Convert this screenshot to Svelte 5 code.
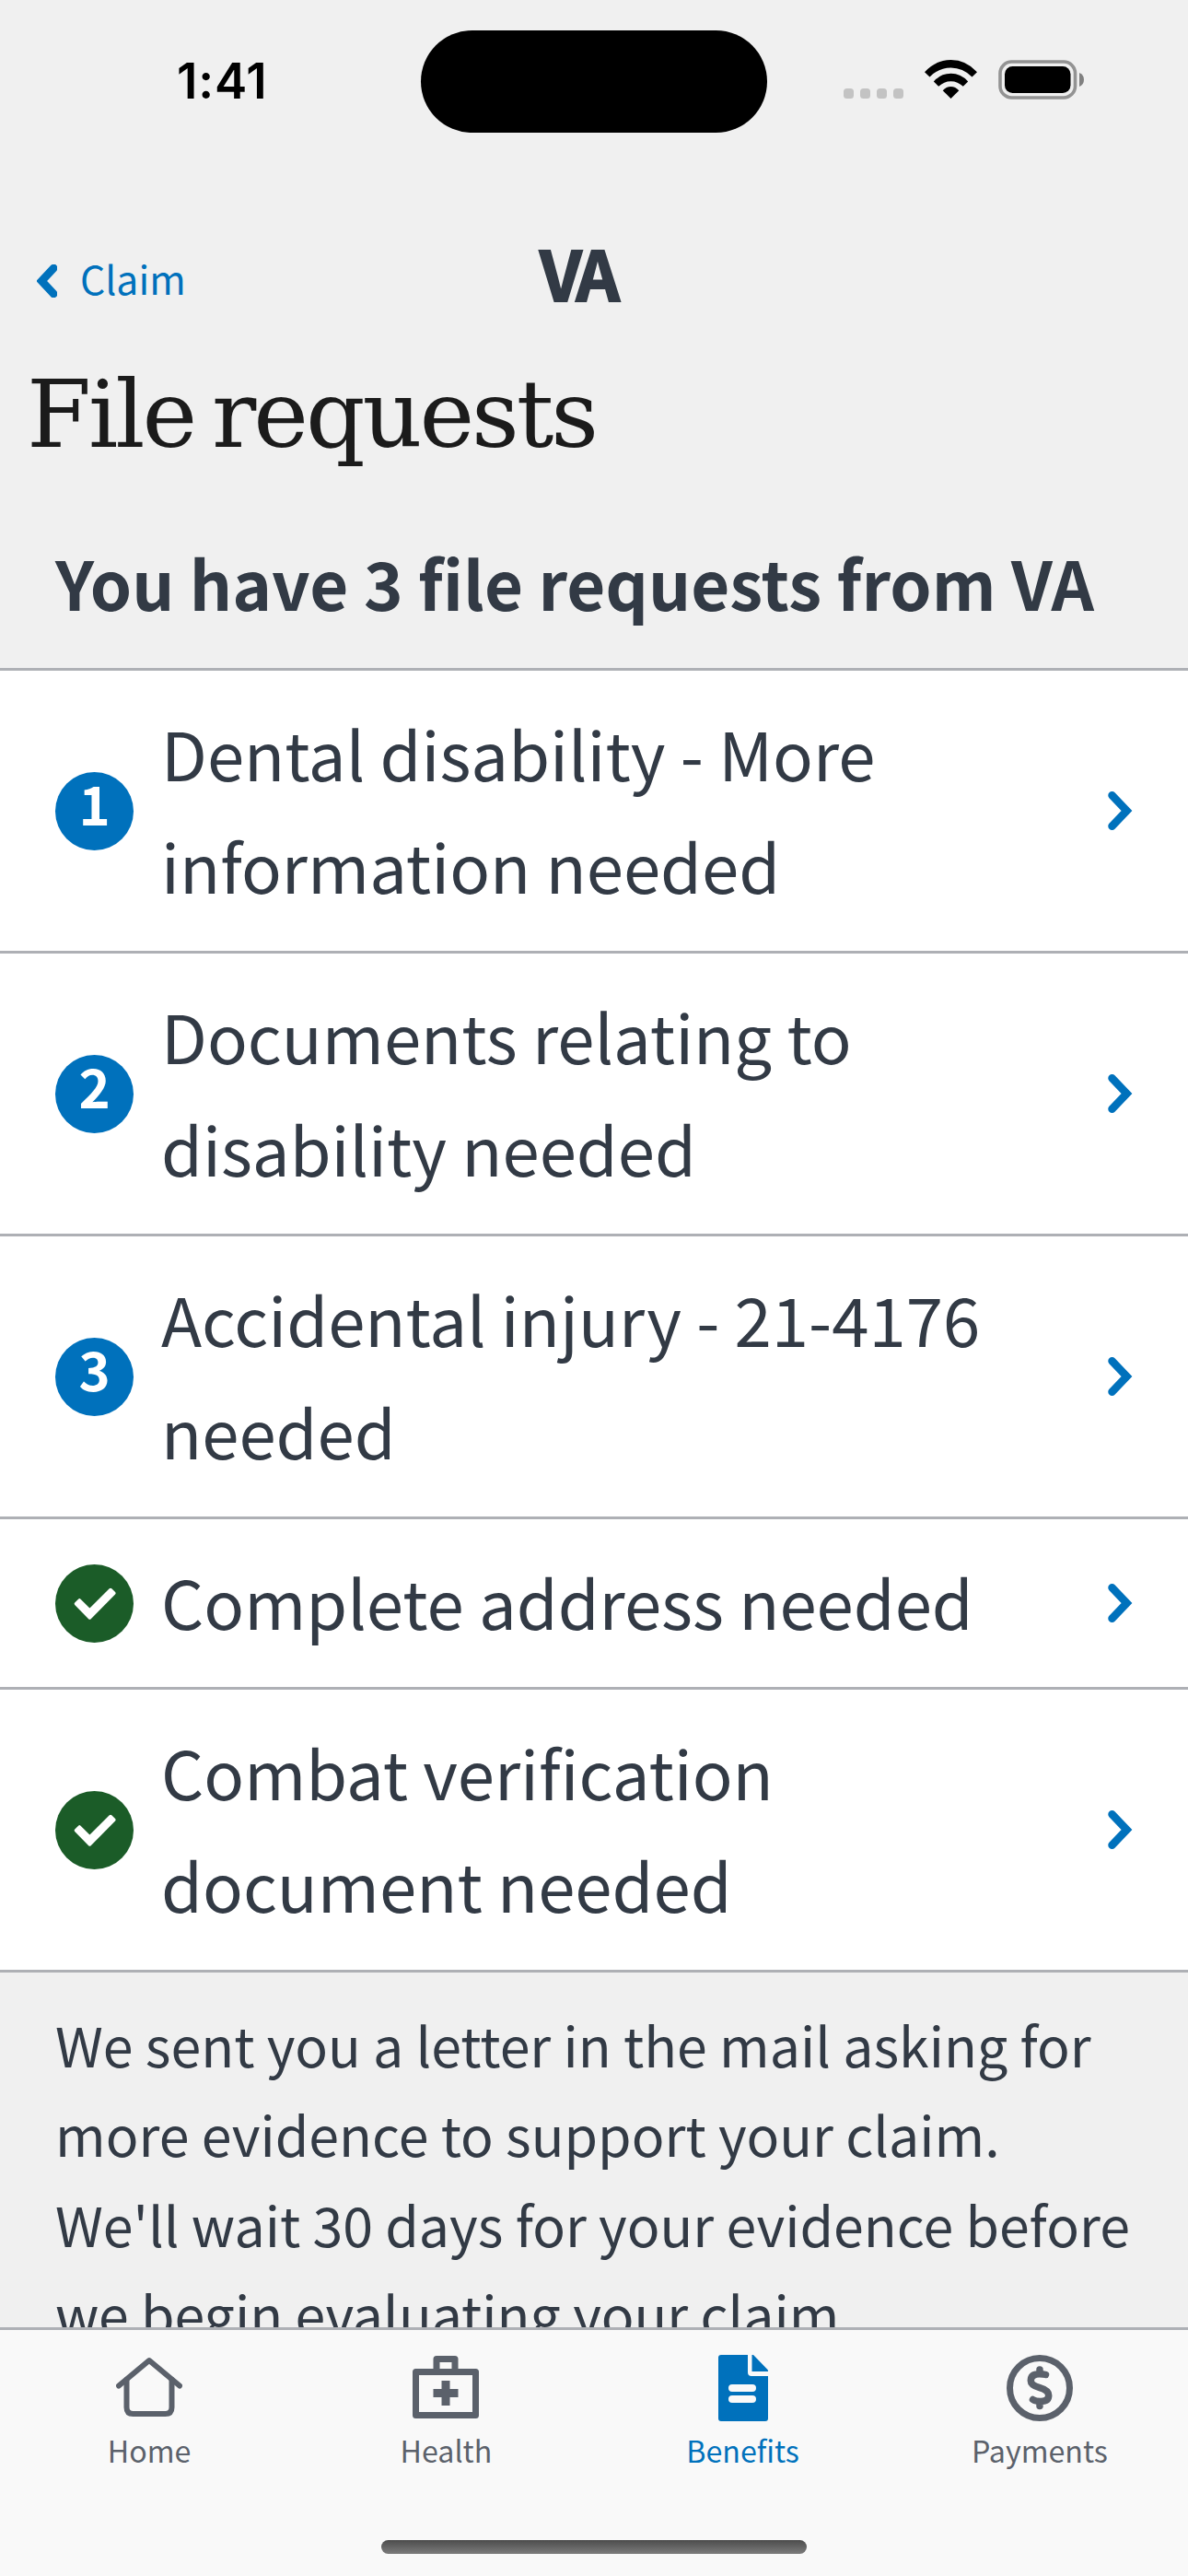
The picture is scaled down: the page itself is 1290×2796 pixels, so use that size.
<script>
  const requests = [
    { badge: '1', title: 'Dental disability - More information needed' },
    { badge: '2', title: 'Documents relating to disability needed' },
    { badge: '3', title: 'Accidental injury - 21-4176 needed' },
    { done: true, title: 'Complete address needed' },
    { done: true, title: 'Combat verification document needed' }
  ];
  const tabs = ['Home', 'Health', 'Benefits', 'Payments'];
  const active = 'Benefits';
</script>

<div class="screen">
  <header class="status">
    <div class="side"><span class="time">1:41</span></div>
    <div class="island"></div>
    <div class="side indicators">
      <div class="dots"><i></i><i></i><i></i><i></i></div>
      <svg class="wifi" viewBox="0 0 57 42" width="57" height="42">
        <path d="M0 13.2Q12 0 28.500 0T57 13.200L51.500 18.500Q41.500 8.500 28.500 8.500T5.500 18.500Z" />
        <path d="M9.800 23.500Q17.500 14.800 28.500 14.800T47.200 23.500L41.800 28.800Q36 23.200 28.500 23.200T15.200 28.800Z" />
        <path d="M19.700 33.300Q23.500 29 28.500 29T37.300 33.300L28.500 42Z" />
      </svg>
      <svg class="battery" viewBox="0 0 93 43" width="93" height="43">
        <rect x="2" y="2" width="81.500" height="39" rx="12.500" fill="none" stroke="#939393" stroke-width="3.600" />
        <rect x="7" y="7" width="71.500" height="29" rx="8.500" />
        <path d="M88 14Q93 16 93 21.500T88 29Z" fill="#808080" />
      </svg>
    </div>
  </header>

  <nav class="topbar">
    <div class="back">
      <svg viewBox="0 0 22 36" width="22" height="36"><path d="M18.300 4L5.200 18L18.300 32" /></svg>
      <span>Claim</span>
    </div>
    <div class="logo">VA</div>
    <div></div>
  </nav>

  <h1>File requests</h1>

  <main>
    <h2>You have 3 file requests from VA</h2>
    <ul>
      {#each requests as request}
        <li>
          {#if request.done}
            <svg class="badge" viewBox="0 0 84 84" width="85" height="85">
              <circle cx="42" cy="42" r="42" fill="#1b5c28" />
              <path d="M59.300 27.200L63.100 31L37 57.200L22.200 42.300L26 38.500L37 49.400Z" fill="#fff" stroke="#fff" stroke-width="3.500" stroke-linejoin="round" />
            </svg>
          {:else}
            <span class="badge number">{request.badge}</span>
          {/if}
          <span class="title">{request.title}</span>
          <svg class="chevron" viewBox="0 0 27 42" width="27" height="42"><path d="M4.500 4.300L20.500 21L4.500 37.700" /></svg>
        </li>
      {/each}
    </ul>
    <p>We sent you a letter in the mail asking for more evidence to support your claim. We'll wait 30 days for your evidence before we begin evaluating your claim.</p>
  </main>

  <footer>
    <div class="tabs">
      {#each tabs as tab}
        <div class="tab" class:active={tab === active}>
          <svg viewBox="0 0 72 72" width="72" height="72">
            {#if tab === 'Home'}
              <path class="line" d="M3 33.500L36 6L69 33.500" />
              <path class="line" d="M11.500 27V57Q11.500 64 18.500 64H53.500Q60.500 64 60.500 57V27" />
            {:else if tab === 'Health'}
              <path class="box" d="M3.500 18.500H68.500V65.500H3.500ZM26 18V4.500H46V18" />
              <path d="M31.500 28H40.500V37H49.500V46H40.500V55H31.500V46H22.500V37H31.500Z" />
            {:else if tab === 'Benefits'}
              <path fill-rule="evenodd" d="M12 0H41V19Q41 23 45 23H63V69Q63 72 60 72H12Q9 72 9 69V3Q9 0 12 0ZM24 32Q20 32 20 36T24 40H46Q50 40 50 36T46 32ZM24 44Q20 44 20 48T24 52H46Q50 52 50 48T46 44Z" />
              <path d="M45.500 0H47L63 16.500V18H45.500Z" />
            {:else}
              <circle class="line ring" cx="36" cy="36" r="32.500" />
              <path class="line dollar" d="M42.500 21.500Q40 20.700 35.500 20.700Q26.300 20.700 26.300 28Q26.300 33 36 35.700Q45.700 38.500 45.700 44Q45.700 50.500 37 50.500Q31.500 50.500 28.500 48.500M36 16V20M36 51V55.500" />
            {/if}
          </svg>
          <span>{tab}</span>
        </div>
      {/each}
    </div>
    <div class="home-indicator"></div>
  </footer>
</div>

<style>
  :global(body) { margin: 0; }
  .screen {
    width: 1290px;
    height: 2796px;
    display: flex;
    flex-direction: column;
    overflow: hidden;
    background: #f0f0f0;
    color: #323a45;
    font-family: "Noto Sans CJK JP", "Noto Sans", sans-serif;
  }
  .status {
    height: 178px;
    flex: none;
    display: grid;
    grid-template-columns: 1fr 376px 1fr;
    align-items: start;
    color: #000;
  }
  .island { height: 111px; margin-top: 33px; border-radius: 56px; background: #000; }
  .time {
    display: block;
    padding: 56px 0 0 192px;
    font: 600 53px/64px Inter, sans-serif;
    letter-spacing: 0.8px;
  }
  .indicators { display: flex; padding: 65px 0 0 83px; }
  .dots { display: flex; gap: 7px; padding-top: 31px; }
  .dots i { width: 11px; height: 11px; border-radius: 3.5px; background: #c3c3c3; }
  .wifi { margin-left: 23px; }
  .battery { margin-left: 23px; }
  .topbar {
    height: 204px;
    flex: none;
    display: grid;
    grid-template-columns: 585px 1fr 585px;
    align-items: start;
  }
  .back {
    display: flex;
    align-items: center;
    gap: 25px;
    padding: 89px 0 0 40px;
    color: #0071bc;
    font-size: 42.7px;
    line-height: 68px;
  }
  .back svg { margin-top: 7px; }
  .back path, .chevron path { fill: none; stroke: #0071bc; stroke-width: 8.5; stroke-linecap: round; }
  .logo {
    padding: 67px 0 0 1px;
    font-weight: 700;
    font-size: 74px;
    line-height: 100px;
    letter-spacing: -5px;
    white-space: nowrap;
    -webkit-text-stroke: 2px currentColor;
  }
  h1 {
    margin: 0;
    flex: none;
    height: 193px;
    padding: 8px 0 0 29px;
    box-sizing: border-box;
    color: #1b1b1b;
    font: 400 101px/120px "DejaVu Serif", serif;
    letter-spacing: -3.1px;
    word-spacing: -10px;
    white-space: nowrap;
  }
  main { flex: 1; min-height: 0; overflow: hidden; }
  h2 {
    margin: -4px 0 0;
    height: 154px;
    padding: 0 0 0 60px;
    font-size: 72.5px;
    line-height: 122px;
    font-weight: 700;
    white-space: nowrap;
  }
  ul { list-style: none; margin: 0; padding: 0; border-top: 3px solid #aeb0b5; background: #fff; }
  li { display: flex; align-items: center; padding: 0 60px; border-bottom: 3px solid #aeb0b5; }
  .badge { width: 85px; height: 85px; flex: none; }
  .number {
    box-sizing: border-box;
    padding-bottom: 17px;
    border-radius: 50%;
    background: #0071bc;
    color: #fff;
    font-weight: 700;
    font-size: 58px;
    line-height: 67px;
    text-align: center;
  }
  .title { flex: 1; padding: 28px 60px 32px 30px; font-size: 72.5px; line-height: 122px; }
  .chevron { flex: none; }
  p { margin: 0; padding: 28.5px 60px 0; font-size: 59.05px; line-height: 97.5px; }
  footer { height: 270px; flex: none; box-sizing: border-box; border-top: 3px solid #aeb0b5; background: #f9f9f9; }
  .tabs { display: grid; grid-template-columns: repeat(4, 1fr); box-sizing: border-box; padding: 27px 0 0 1px; height: 228px; }
  .tab { display: flex; flex-direction: column; align-items: center; color: #5b616b; fill: currentColor; font-size: 32.2px; line-height: 48px; }
  .tab span { margin-top: 7px; }
  .tab.active { color: #0071bc; }
  .line { fill: none; stroke: currentColor; stroke-width: 6; stroke-linecap: round; stroke-linejoin: round; }
  .ring { stroke-width: 7; }
  .dollar { stroke-width: 7.5; }
  .box { fill: none; stroke: currentColor; stroke-width: 7; stroke-linejoin: round; }
  .home-indicator { width: 462px; height: 15px; margin: 0 auto; border-radius: 8px; background: linear-gradient(#4c4c4c, #7c7c7c); }
</style>
